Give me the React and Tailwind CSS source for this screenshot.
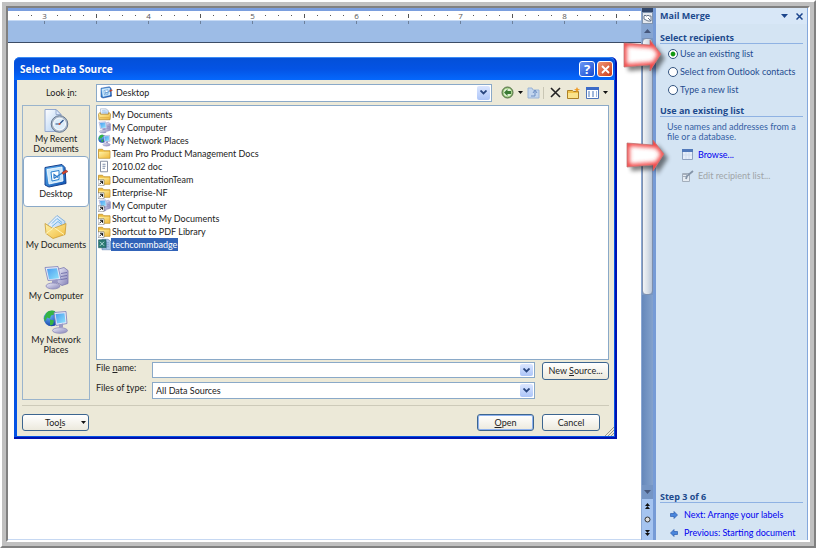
import React from "react";

const dialogFiles = [
  { name: "My Documents", icon: "drawer" },
  { name: "My Computer", icon: "computer" },
  { name: "My Network Places", icon: "network" },
  { name: "Team Pro Product Management Docs", icon: "folder" },
  { name: "2010.02 doc", icon: "page" },
  { name: "DocumentationTeam", icon: "folder", shortcut: true },
  { name: "Enterprise-NF", icon: "folder", shortcut: true },
  { name: "My Computer", icon: "computer", shortcut: true },
  { name: "Shortcut to My Documents", icon: "folder", shortcut: true },
  { name: "Shortcut to PDF Library", icon: "folder", shortcut: true },
  { name: "techcommbadge", icon: "excel", selected: true },
];

function Defs() {
  return (
    <svg className="absolute h-0 w-0" aria-hidden="true">
      <defs>
        <linearGradient id="screen" x1="0" y1="0" x2="1" y2="1">
          <stop offset="0" stopColor="#4a9cf0" />
          <stop offset="1" stopColor="#8fe2fb" />
        </linearGradient>
        <linearGradient id="case" x1="0" y1="0" x2="1" y2="1">
          <stop offset="0" stopColor="#eeeefa" />
          <stop offset="1" stopColor="#8683b8" />
        </linearGradient>
        <linearGradient id="gold" x1="0" y1="0" x2="1" y2="1">
          <stop offset="0" stopColor="#fff3a8" />
          <stop offset="1" stopColor="#f0b93c" />
        </linearGradient>
        <linearGradient id="sheet" x1="0" y1="0" x2="1" y2="1">
          <stop offset="0" stopColor="#ffffff" />
          <stop offset="1" stopColor="#a9cbf2" />
        </linearGradient>
        <radialGradient id="globe" cx="0.35" cy="0.3" r="0.8">
          <stop offset="0" stopColor="#6db8ff" />
          <stop offset="1" stopColor="#0b379f" />
        </radialGradient>
        <linearGradient id="desk" x1="0" y1="0" x2="1" y2="1">
          <stop offset="0" stopColor="#5db3f2" />
          <stop offset="1" stopColor="#0a4fb0" />
        </linearGradient>
      </defs>
    </svg>
  );
}

function Art({ kind }) {
  switch (kind) {
    case "recent":
      return (
        <>
          <path d="M2 1h11l5 5v17H2z" fill="url(#sheet)" stroke="#93a8cf" />
          <path d="M13 1l5 5h-5z" fill="#dbe8fa" stroke="#8095bd" strokeWidth=".7" />
          <circle cx="16.500" cy="15.500" r="8.300" fill="#a9b8ca" stroke="#66788f" />
          <circle cx="16.500" cy="15.500" r="6" fill="#dcedfa" stroke="#fff" />
          <path d="M16.500 15.500l4-4M16.500 15.500h-4" stroke="#284f86" strokeWidth="1.200" />
          <circle cx="16.500" cy="15.500" r="1" fill="#e2542e" />
        </>
      );
    case "desktop":
      return (
        <>
          <path d="M2 4l17-3 3 3 1 16-17 3.500-4-2z" fill="url(#desk)" stroke="#153f8d" />
          <path d="M4 6l15-2.500 1 14L6 20.500z" fill="#c9e7fc" stroke="#fff" strokeWidth=".8" />
          <path d="M8 8.500l8-1.500v9l-7 1.500z" fill="#fff" stroke="#2b7fcf" />
          <path d="M11 15v-4l4 3M11 15l9-6" stroke="#2b78c7" strokeWidth="1.200" fill="none" />
          <path d="M19 9l4-2.500L25 8l-5 3z" fill="#d8452b" stroke="#812c22" strokeWidth=".5" />
        </>
      );
    case "docs":
      return (
        <>
          <path d="M5 10L14 1l8 6-1 10H6z" fill="url(#sheet)" stroke="#6da5d8" strokeWidth=".8" />
          <path d="M9 9l5-5 5 4M9 12l6-5 4 3" stroke="#70b6e8" fill="none" />
          <path d="M2 9l8 5 13-5-1 11-12 4-7-5z" fill="url(#gold)" stroke="#c99a34" strokeWidth=".8" />
          <path d="M3 19l8-6 10 7" stroke="#fff5bc" fill="none" />
        </>
      );
    case "computer":
      return (
        <>
          <path d="M14 4l7-2 4 3v13l-6 2-5-3z" fill="url(#case)" stroke="#7a77ae" strokeWidth=".8" />
          <path d="M18 8l6-1M18 11l6-1M18 14l6-1" stroke="#6563a2" strokeWidth=".8" />
          <path d="M2 2l13-1 3 13-13 1z" fill="#e5e8f8" stroke="#7a7db8" strokeWidth=".8" />
          <path d="M4 3.500l10-.8 2 10-10 1z" fill="url(#screen)" />
          <path d="M9 15l5-1v4h-5z" fill="#9998c4" />
          <ellipse cx="10" cy="20.500" rx="7" ry="3" fill="url(#case)" stroke="#8c89b8" strokeWidth=".8" />
        </>
      );
    case "network":
      return (
        <>
          <circle cx="8.500" cy="9" r="7.800" fill="url(#globe)" />
          <path d="M3 4c3-4 8-3 9-2l-1 3-3 1-1 3-3-1-2 4-1-3zM7 10l4 1-1 4-3 1z" fill="#35b443" />
          <path d="M11 3l12-1 1 12-11 2z" fill="#e5e8f8" stroke="#7a7db8" strokeWidth=".8" />
          <path d="M12.500 4.500l9-.8 1 9-8.500 1.200z" fill="url(#screen)" />
          <path d="M16 15l4-1v4h-4z" fill="#9998c4" />
          <ellipse cx="17" cy="21" rx="7.500" ry="2.800" fill="url(#case)" stroke="#8c89b8" strokeWidth=".8" />
        </>
      );
    case "drawer":
      return (
        <>
          <path d="M5 12V1h11l5 4v7z" fill="url(#sheet)" stroke="#8a9cbb" />
          <path d="M8 5h7M8 8h9" stroke="#78aee0" />
          <path d="M1 12l2-3h2v3h16V9h2l2 3-1 11H2z" fill="url(#gold)" stroke="#b5882c" strokeWidth="1.500" />
          <path d="M4 19h18" stroke="#d9a540" strokeWidth="1.500" />
        </>
      );
    case "folder":
      return (
        <>
          <path d="M1 4h8l3 3h12v15H1z" fill="#efbd41" stroke="#b98c2a" strokeWidth="1.500" />
          <path d="M2 9h21v12H2z" fill="url(#gold)" />
        </>
      );
    case "page":
      return (
        <>
          <path d="M5 2h14v21H5z" fill="#fff" stroke="#7c869c" strokeWidth="1.800" />
          <path d="M9 8h6M9 12h6M9 16h5" stroke="#65799a" strokeWidth="1.700" />
        </>
      );
    case "excel":
      return (
        <>
          <path d="M8 2h12l5 4v17H8z" fill="#a9c6ea" stroke="#4a6ea3" />
          <path d="M13 9h9M13 13h9M13 17h9M17 6v15" stroke="#5a80b3" />
          <path d="M1 3h15v16H1z" fill="#2a7a72" stroke="#1a5558" />
          <path d="M4 7l8 8M12 7l-8 8" stroke="#b9dfe0" strokeWidth="2" />
        </>
      );
    default:
      return null;
  }
}

function Icon({ kind, size, shortcut }) {
  return (
    <svg width={size} height={size} viewBox="0 0 26 25" className="shrink-0" fill="none" aria-hidden="true">
      <Art kind={kind} />
      {shortcut && (
        <g>
          <path d="M0 13h12v12H0z" fill="#fff" stroke="#555" />
          <path d="M3 22l5-5M4 16h5v5" stroke="#111" strokeWidth="2" />
        </g>
      )}
    </svg>
  );
}

function Ruler() {
  const cells = Array.from({ length: 48 }, (_, i) => i);
  return (
    <div className="shrink-0 overflow-hidden border-b border-[#3c4c66] bg-[#9dbce6]">
      <div className="h-[3px] bg-[#7a9ede]" />
      <div className="flex h-[9px] items-center bg-white pl-1 font-['Open_Sans',sans-serif] text-[8px] leading-[9px] text-[#555]">
        {cells.map((i) => (
          <span key={i} className="flex w-[13px] shrink-0 justify-center">
            {i % 8 === 2 ? (
              3 + (i - 2) / 8
            ) : i % 8 === 6 ? (
              <i className="h-1 w-px bg-[#555]" />
            ) : (
              <i className="h-px w-px bg-[#555]" />
            )}
          </span>
        ))}
      </div>
      <div className="flex h-[22px] border-t border-[#c6daf5] pl-1">
        {cells.map((i) => (
          <span key={i} className="flex w-[13px] shrink-0 justify-center">
            {i % 4 === 2 && <i className="h-[3px] w-px bg-[#6c809c]" />}
          </span>
        ))}
      </div>
    </div>
  );
}

function ScrollBar() {
  return (
    <div className="flex w-3 shrink-0 flex-col border-l border-[#8ba8d3] bg-[#7898c5]">
      <div className="h-1 bg-[#33486c]" />
      <button aria-label="View ruler" className="flex h-3 items-center justify-center border border-[#8195ae] bg-[#e4e8ee]">
        <svg className="shrink-0" width="9" height="8" viewBox="0 0 9 8" fill="none" stroke="#65758a">
          <path d="M1 2l1-1 1 1h1l1-1 1 1h2v5H5L1 5z" fill="#fff" />
          <path d="M5 4l3 3" />
        </svg>
      </button>
      <button aria-label="Scroll up" className="flex h-[14px] items-center justify-center bg-[#86a5d1]">
        <svg width="7" height="4"><path d="M0 4L3.500 0 7 4z" fill="#46577b" /></svg>
      </button>
      <div className="flex-[257] rounded-sm border border-[#7d8fae] bg-linear-to-r from-[#f2f4f6] via-[#d9e0e8] to-[#b9c6d8]" />
      <div className="flex-[191] bg-linear-to-r from-[#6588bb] to-[#84a2cc]" />
      <button aria-label="Scroll down" className="flex h-[14px] items-center justify-center bg-[#7595c4]">
        <svg width="7" height="4"><path d="M0 0h7L3.500 4z" fill="#46577b" /></svg>
      </button>
      <div className="flex h-[41px] flex-col items-center justify-around bg-[#a5c4f0]">
        <button aria-label="Previous page" className="block">
          <svg className="block" width="5" height="6"><path d="M0 3L2.500 0 5 3zM0 6l2.500-3L5 6z" fill="#111" /></svg>
        </button>
        <button aria-label="Browse object" className="block">
          <svg className="block" width="7" height="7"><circle cx="3.500" cy="3.500" r="2.500" fill="#ddd" stroke="#333" /></svg>
        </button>
        <button aria-label="Next page" className="block">
          <svg className="block" width="5" height="6"><path d="M0 0h5L2.500 3zM0 3h5L2.500 6z" fill="#111" /></svg>
        </button>
      </div>
    </div>
  );
}

function Heading({ children }) {
  return (
    <h2 className="h-[11px] border-b border-[#8fb2e3] font-['Open_Sans',sans-serif] text-[9px] leading-[10px] font-bold whitespace-nowrap text-[#1d4a8d]">
      {children}
    </h2>
  );
}

function StepArrow({ back }) {
  return (
    <svg width="8" height="8" viewBox="0 0 8 8" className={back ? "shrink-0 rotate-180" : "shrink-0"}>
      <path d="M.5 2.500H4V.5L7.500 4 4 7.500v-2H.5z" fill="#4a86dc" stroke="#2a5caf" strokeWidth=".7" />
    </svg>
  );
}

function TaskPane() {
  const options = ["Use an existing list", "Select from Outlook contacts", "Type a new list"];
  return (
    <aside className="flex w-[155px] shrink-0 flex-col border-l-3 border-[#769bd6] bg-[#d4e4f3]">
      <div className="flex grow flex-col border-r border-[#85a8dc]">
        <header className="flex h-4 items-center bg-[#d8e7f7] pr-1 pl-1">
          <h1 className="grow font-['Open_Sans',sans-serif] text-[9px] leading-4 font-bold text-[#1d4a8d]">Mail Merge</h1>
          <button aria-label="Pane menu" className="px-2">
            <svg className="block" width="7" height="4"><path d="M0 0h7L3.500 4z" fill="#1c458b" /></svg>
          </button>
          <button aria-label="Close pane">
            <svg className="block" width="7" height="7"><path d="M.5.5l6 6M6.500.5l-6 6" stroke="#1c458b" strokeWidth="1.500" /></svg>
          </button>
        </header>
        <div className="flex grow flex-col px-1 pt-[9px]">
          <Heading>Select recipients</Heading>
          <div className="flex flex-col pt-px pl-2">
            {options.map((o, i) => (
              <label key={o} className="flex h-[18px] items-center gap-[2px] whitespace-nowrap text-[#1f4c90]">
                <input
                  type="radio"
                  name="recipients"
                  defaultChecked={i === 0}
                  className="m-0 h-[10px] w-[10px] shrink-0 appearance-none rounded-full border border-[#33547f] bg-white bg-radial checked:from-[#129a12] checked:from-35% checked:to-white checked:to-50%"
                />
                {o}
              </label>
            ))}
          </div>
          <div className="pt-[7px]">
            <Heading>Use an existing list</Heading>
          </div>
          <p className="pt-[5px] pl-[7px] leading-[10px] text-[#3561a4]">
            Use names and addresses from a file or a database.
          </p>
          <a href="#browse" className="mt-[2px] flex h-[21px] items-center gap-[5px] pl-[22px] text-[#0000f0]">
            <svg width="11" height="11"><path d="M.5.5h10v10H.5z" fill="#e6eefa" stroke="#8fa2c0" /><path d="M0 0h11v3H0z" fill="#5279ba" /><path d="M4 3v7M7 3v7M1 6h9" stroke="#d2deef" /></svg>
            Browse...
          </a>
          <button disabled className="flex h-[21px] items-center gap-1 pl-[22px] whitespace-nowrap text-[#a0a5a8]">
            <svg width="12" height="12" fill="none"><path d="M.5 3.500h7v8h-7z" fill="#e5ebf1" stroke="#a3aebb" /><path d="M1 4.500h4M1 6.500h3" stroke="#a3aebb" /><path d="M4 9l1-3 6-5" stroke="#8494a8" strokeWidth="1.800" /></svg>
            Edit recipient list...
          </button>
          <div className="mt-auto">
            <Heading>Step 3 of 6</Heading>
            <div className="flex flex-col gap-1 pt-[5px] pl-[10px] whitespace-nowrap text-[#0000f0]">
              <a href="#next" className="flex h-[14px] items-center gap-[6px]">
                <StepArrow />
                Next: Arrange your labels
              </a>
              <a href="#previous" className="flex h-[14px] items-center gap-[6px]">
                <StepArrow back />
                Previous: Starting document
              </a>
            </div>
          </div>
        </div>
      </div>
    </aside>
  );
}

function ComboArrow() {
  return (
    <span className="pointer-events-none flex w-[13px] shrink-0 items-center justify-center rounded-xs bg-linear-to-b from-[#dbe6ff] to-[#adc5f8]">
      <svg width="7" height="5" fill="none"><path d="M.5.5l3 3 3-3" stroke="#29467f" strokeWidth="1.800" /></svg>
    </span>
  );
}

function Place({ icon, lines, className }) {
  return (
    <button className={"flex w-full shrink-0 flex-col items-center whitespace-nowrap " + className}>
      <Icon kind={icon} size={26} />
      {lines.map((line) => (
        <span key={line} className="leading-[10px]">{line}</span>
      ))}
    </button>
  );
}

function Dropper() {
  return <svg width="5" height="3"><path d="M0 0h5L2.500 3z" fill="#111" /></svg>;
}

function Toolbar() {
  return (
    <div className="flex shrink-0 items-center pl-[9px]">
      <button aria-label="Back">
        <svg className="block" width="13" height="13" fill="none"><circle cx="6.500" cy="6.500" r="5.500" fill="#8fc070" stroke="#4f6b42" /><circle cx="6.500" cy="6.500" r="3.900" fill="#dff0d4" /><path d="M3 6.500L6.500 3v2H10v3H6.500v2z" fill="#3a7a34" /></svg>
      </button>
      <button aria-label="Back history" className="px-1"><Dropper /></button>
      <button aria-label="Up one level">
        <svg className="block" width="13" height="13" fill="none"><path d="M1 2h4l1 2h6v8H1z" fill="#c3d6ee" stroke="#9bb4d6" /><path d="M4 10h4V5M6 7l2-3 2 3" stroke="#6d8fc3" /></svg>
      </button>
      <span className="mx-[3px] h-3 w-px bg-[#c9c6b4]" />
      <button aria-label="Delete" className="px-[3px]">
        <svg className="block" width="11" height="11"><path d="M1 1l9 9M10 1L1 10" stroke="#222" strokeWidth="1.600" /></svg>
      </button>
      <button aria-label="New folder" className="px-[3px]">
        <svg className="block" width="13" height="12"><path d="M.5 3.500h5l1 1h5v7H.5z" fill="#f2c44e" stroke="#ac8128" /><path d="M1 6h10v5H1z" fill="#fae38c" /><path d="M10 0l1 2 2 .5-2 1-1 2-1-2-2-1 2-.5z" fill="#ee9b25" /></svg>
      </button>
      <button aria-label="Views" className="flex items-center gap-1 pl-[3px]">
        <svg className="block" width="13" height="12"><path d="M.5.5h12v11H.5z" fill="#fff" stroke="#4e74b9" /><path d="M0 0h13v3H0z" fill="#3c6bc7" /><path d="M2 5h2M6 5h2M10 5h1M2 7h2M6 7h2M10 7h1M2 9h2M6 9h2M10 9h1" stroke="#4472b6" /></svg>
        <Dropper />
      </button>
    </div>
  );
}

const pushButton =
  "rounded-[3px] border border-[#3c658f] bg-linear-to-b from-white to-[#ece9dd] text-center text-[#222]";

function Dialog() {
  return (
    <section
      role="dialog"
      aria-label="Select Data Source"
      className="absolute top-[49px] left-[6px] flex h-[382px] w-[603px] flex-col rounded-t-md border-r-2 border-b-2 border-[#0013b0] bg-[#0453e4]"
    >
      <header className="flex h-[23px] shrink-0 items-center gap-[2px] rounded-t-md border-t border-[#3b8cf5] bg-linear-to-b from-[#0450d8] via-[#0453e4] to-[#0568fd] pr-[2px] pl-[6px] font-['Open_Sans',sans-serif]">
        <h1 className="grow text-[10px] font-bold text-white text-shadow-2xs">Select Data Source</h1>
        <button aria-label="Help" className="h-4 w-4 rounded-[3px] border border-white bg-linear-to-br from-[#6c97f5] to-[#1547d0] text-[13px] leading-[14px] font-bold text-white">?</button>
        <button aria-label="Close" className="flex h-4 w-4 items-center justify-center rounded-[3px] border border-white bg-linear-to-br from-[#f09673] to-[#ca3512]">
          <svg width="9" height="9"><path d="M1 1l7 7M8 1L1 8" stroke="#fff" strokeWidth="1.800" /></svg>
        </button>
      </header>
      <div className="mr-px mb-px ml-[3px] flex min-h-0 grow flex-col bg-[#ece9d8] px-[5px]">
        <div className="flex h-[25px] shrink-0 items-center">
          <label htmlFor="look" className="w-[74px] shrink-0 pl-6">Look <u>i</u>n:</label>
          <div className="flex h-[18px] w-[396px] shrink-0 border border-[#8aa9c8] bg-white p-px">
            <span className="flex items-center pl-[2px]"><Icon kind="desktop" size={13} /></span>
            <select id="look" className="grow appearance-none bg-transparent pl-[3px] outline-none"><option>Desktop</option></select>
            <ComboArrow />
          </div>
          <Toolbar />
        </div>
        <div className="flex h-[295px] shrink-0 gap-[6px]">
          <nav className="flex w-[68px] shrink-0 flex-col border border-[#9ab4cc] pt-[2px]">
            <Place icon="recent" className="h-12" lines={["My Recent", "Documents"]} />
            <Place icon="desktop" className="h-[51px] rounded-sm border border-[#8aa9c8] bg-white pt-[6px]" lines={["Desktop"]} />
            <Place icon="docs" className="h-[51px] pt-[7px]" lines={["My Documents"]} />
            <Place icon="computer" className="h-[46px] pt-[7px]" lines={["My Computer"]} />
            <Place icon="network" className="pt-[5px]" lines={["My Network", "Places"]} />
          </nav>
          <div className="flex min-w-0 grow flex-col">
            <ul className="h-[255px] shrink-0 border border-[#8aa9c8] bg-white pt-[2px] pl-px">
              {dialogFiles.map((f) => (
                <li key={f.name + f.icon + String(f.shortcut)} className="flex h-[13px] items-center">
                  <Icon kind={f.icon} size={13} shortcut={f.shortcut} />
                  <span className={f.selected ? "bg-[#3163b8] px-px leading-[13px] text-white" : "px-px leading-[13px]"}>
                    {f.name}
                  </span>
                </li>
              ))}
            </ul>
            <div className="grid grid-cols-[56px_1fr_67px] gap-y-1 pt-[2px] whitespace-nowrap">
              <label htmlFor="fname" className="leading-[12px]">File <u>n</u>ame:</label>
              <div className="mr-[7px] flex h-4 border border-[#8aa9c8] bg-white p-px">
                <input id="fname" className="min-w-0 grow bg-transparent outline-none" />
                <ComboArrow />
              </div>
              <button className={pushButton + " row-span-2 h-[18px]"}>New <u>S</u>ource...</button>
              <label htmlFor="ftype" className="leading-[12px]">Files of <u>t</u>ype:</label>
              <div className="mr-[7px] flex h-[17px] border border-[#8aa9c8] bg-white p-px">
                <select id="ftype" className="min-w-0 grow appearance-none bg-transparent pl-[2px] outline-none"><option>All Data Sources</option></select>
                <ComboArrow />
              </div>
            </div>
          </div>
        </div>
        <hr className="mt-[5px] border-t border-[#cdcab9]" />
        <div className="flex shrink-0 items-center pt-2 pr-[9px]">
          <button className={pushButton + " flex h-[17px] w-[67px] items-center justify-between pr-[2px] pl-[22px]"}>
            <span>Too<u>l</u>s</span>
            <Dropper />
          </button>
          <button className={pushButton + " mr-2 ml-auto h-[17px] w-[57px] shadow-[inset_0_0_0_1px_#8db1ee]"}><u>O</u>pen</button>
          <button className={pushButton + " h-[17px] w-[58px]"}>Cancel</button>
        </div>
        <div className="-mr-[5px] flex min-h-0 grow items-end justify-end">
          <svg width="9" height="9" className="shrink-0" stroke="#9b988a"><path d="M0 9l9-9M3 9l6-6M6 9l3-3" /></svg>
        </div>
      </div>
    </section>
  );
}

const arrowShape = "M1 4L27 6V1L38 15 27 32V26L1 28z";

function Pointer({ id, className }) {
  return (
    <svg width="46" height="42" viewBox="0 0 46 42" className={"pointer-events-none absolute " + className} aria-hidden="true">
      <defs>
        <clipPath id={id + "-clip"}><path d={arrowShape} /></clipPath>
        <filter id={id + "-soft"}><feGaussianBlur stdDeviation="2.200" /></filter>
      </defs>
      <path d={arrowShape} fill="#000" opacity=".5" transform="translate(4 4)" filter={"url(#" + id + "-soft)"} />
      <path d={arrowShape} fill="#fff" />
      <g clipPath={"url(#" + id + "-clip)"}>
        <path d={arrowShape} fill="none" stroke="#f03a3a" strokeWidth="5" filter={"url(#" + id + "-soft)"} />
      </g>
      <path d={arrowShape} fill="none" stroke="#b86a6a" strokeWidth=".7" />
    </svg>
  );
}

export default function App() {
  return (
    <div className="h-screen w-full border-2 border-t-white border-r-[#808080] border-b-[#808080] border-l-white font-['Lato','Open_Sans',sans-serif] text-[9px] text-[#222]">
      <Defs />
      <div className="h-full border-4 border-[#c0c0c0]">
        <div className="relative flex h-full overflow-hidden border-2 border-t-[#808080] border-r-white border-b-white border-l-[#808080]">
          <main className="flex min-w-0 grow flex-col border-b border-[#c6d8f2] bg-white">
            <Ruler />
          </main>
          <ScrollBar />
          <TaskPane />
          <Dialog />
          <Pointer id="first" className="top-[31px] left-[615px]" />
          <Pointer id="second" className="top-[131px] left-[618px]" />
        </div>
      </div>
    </div>
  );
}
